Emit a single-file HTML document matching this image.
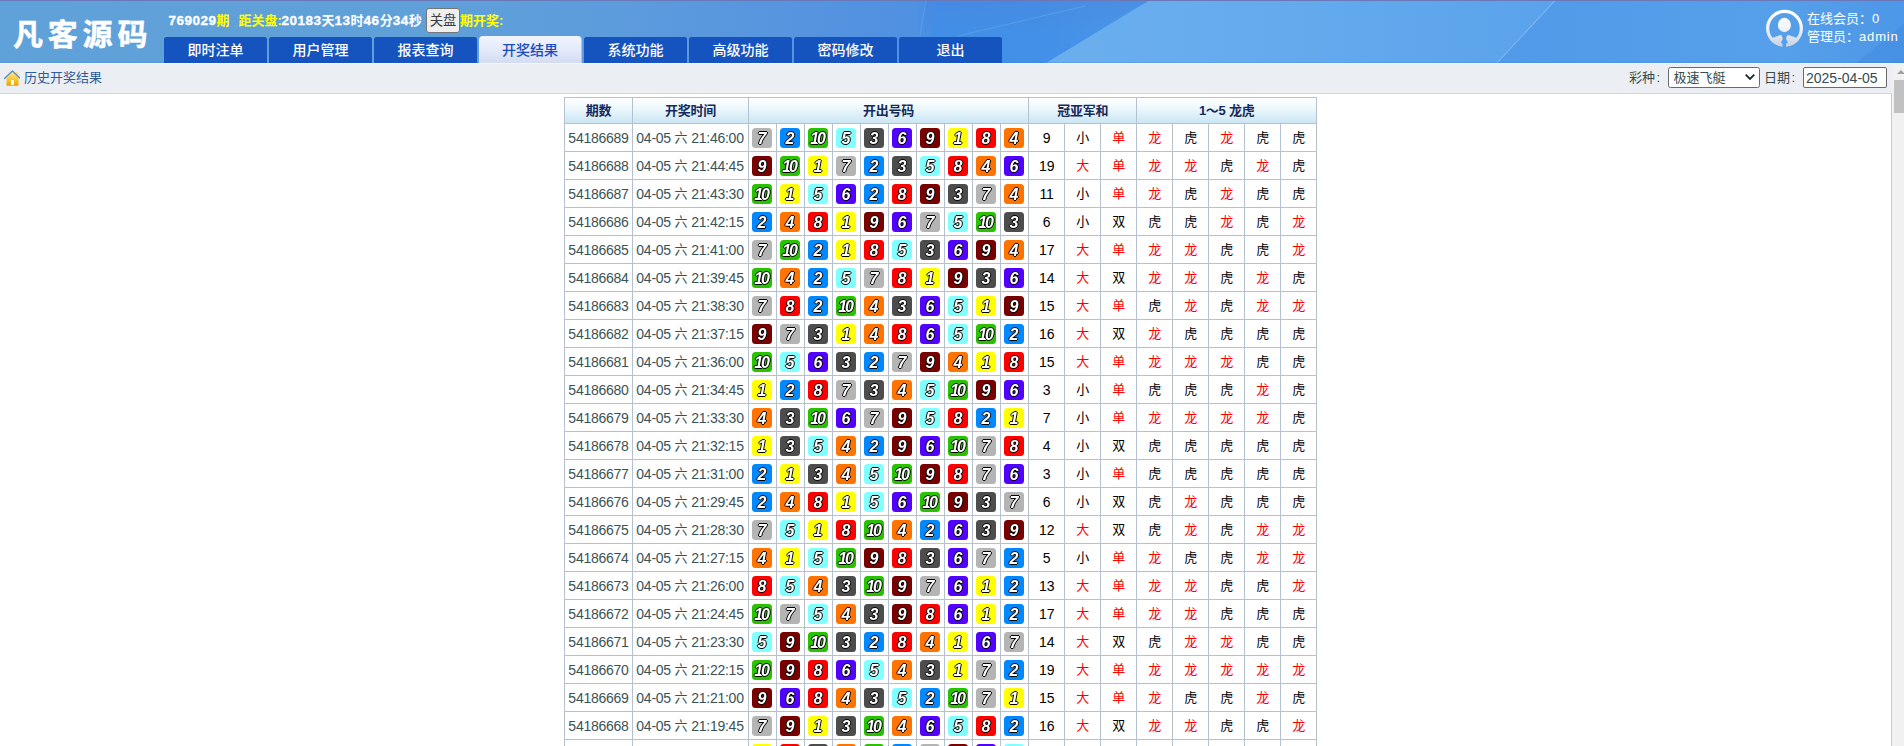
<!DOCTYPE html>
<html lang="zh-CN">
<head>
<meta charset="utf-8">
<title>历史开奖结果</title>
<style>
*{box-sizing:border-box;margin:0;padding:0}
html,body{width:1904px;height:746px;overflow:hidden;background:#fff}
body{position:relative;font-family:"Liberation Sans","Noto Sans CJK SC",sans-serif;font-size:13px;color:#344b50}
.abs{position:absolute;white-space:nowrap}

/* ---------- header ---------- */
#hd{position:absolute;left:0;top:0;width:1904px;height:63px;overflow:hidden;
 background:linear-gradient(90deg,#5fa1d9 0,#5fa0d9 430px,#5d9cdc 600px,#5694df 800px,#5090e1 915px,#418ee6 935px,#4290e7 1040px,#4a96e8 1150px,#529be9 1560px,#569fe9 1780px,#4c97e7 1904px)}
#hd .topline{position:absolute;left:0;top:0;width:100%;height:1px;background:#6a78b8}
#hd .botline{position:absolute;left:0;bottom:0;width:100%;height:1px;background:rgba(40,110,200,.18)}
#logo{left:13px;top:12px;font-size:30px;line-height:40px;font-weight:bold;color:#fff;letter-spacing:4.8px;-webkit-text-stroke:.5px #fff;transform:scaleY(.985);transform-origin:0 40%;font-family:"Noto Sans CJK SC","Liberation Sans",sans-serif}
.info{top:12px;height:18px;line-height:18px;font-size:13.5px;font-weight:bold;color:#fff;letter-spacing:.5px;-webkit-text-stroke:.35px #fff}
.info.cj{letter-spacing:0;font-size:13px;-webkit-text-stroke:0}
.info .c{letter-spacing:0;font-size:13px;-webkit-text-stroke:0}
.y{color:#ffff00}
#btn{left:426px;top:8px;width:34px;height:25px;border:1px solid #767676;border-radius:3px;background:#efefef;color:#3d3d3d;font-size:13.33px;line-height:24.5px;text-align:center}
.tab{position:absolute;top:37px;width:103px;height:26px;background:#1553be;border-radius:2.5px 2.5px 0 0;color:#fff;font-size:14px;font-weight:500;line-height:26px;text-align:center}
.tab.on{top:36px;height:27px;line-height:28px;background:linear-gradient(#f0f4fd,#e4eafa 50%,#d3dcf3);color:#1a4cc0;border-radius:4px 4px 0 0;border-right:1px solid #b4c2e3}
.uinfo{left:1807px;font-size:13px;line-height:18px;color:#fff}

/* ---------- breadcrumb bar ---------- */
#bar{position:absolute;left:0;top:63px;width:1892px;height:31px;background:#ebeff3;border-top:1px solid #f6f6f7;border-bottom:1px solid #c9d9ee}
#bar .ttl{left:24px;top:5px;line-height:18px;font-size:13px;color:#2f5a9b}
#bar .lb{top:5px;line-height:18px;font-size:13px;color:#344b50}
#sel{left:1668px;top:3px;width:92px;height:21px;border:1px solid #6a6a6a;border-radius:2.5px;background:#fff;font-size:13px;line-height:19px;padding-left:4.5px;color:#344b50}
#date{left:1803px;top:3px;width:84px;height:21px;border:1px solid #6a6a6a;border-radius:2px;background:#fff;font-size:14px;line-height:21px;padding-left:2px;color:#344b50}

/* ---------- scrollbar ---------- */
#vline{position:absolute;left:1891px;top:94px;width:1px;height:652px;background:#c9c9c9}
#sb{position:absolute;left:1892px;top:63px;width:17px;height:683px;background:#f1f1f1}
#sb .thumb{position:absolute;left:2px;top:17px;width:13px;height:33px;background:#c1c1c1}
#sb .arr{position:absolute;left:4.5px;top:7px;width:0;height:0;border-left:4px solid transparent;border-right:4px solid transparent;border-bottom:4px solid #a0a0a0}

/* ---------- table ---------- */
#tb{position:absolute;left:564px;top:97px;width:753px;border-collapse:separate;border-spacing:0;table-layout:fixed;border-right:1px solid #b5c1cf;border-bottom:1px solid #b5c1cf;font-size:14px;letter-spacing:-.25px;color:#3a5257}
#tb td,#tb th{border-left:1px solid #b5c1cf;border-top:1px solid #b5c1cf;text-align:center;white-space:nowrap;overflow:hidden;padding:0}
#tb th{height:26px;line-height:25px;font-size:13px;font-weight:bold;color:#152a5c;background:linear-gradient(#ffffff,#f3fafd 30%,#d9eef8 75%,#cbe6f4)}
#tb td{height:28px;line-height:25px;padding-top:2px;vertical-align:top}
#tb td:nth-child(2){padding-right:1px}
#tb td.r{color:#ff0000}
#tb td.k{color:#000}
#tb td.c,#tb td span{font-size:13px;letter-spacing:0}
#tb td.c{padding-top:1px}
#tb td span{position:relative;top:-1px}
#tb td.b{font-size:0;line-height:0;letter-spacing:0;padding-top:4px;padding-right:1px;vertical-align:top}
#tb td.b i{display:inline-block;width:20px;height:20px;border-radius:3.5px;font:italic bold 16px/22px "Liberation Sans",sans-serif;color:#fff;text-align:center;vertical-align:middle;
 text-shadow:1px 0 0 #000,-1px 0 0 #000,0 1px 0 #000,0 -1px 0 #000;will-change:transform}
.n1{background:#ffff00}.n2{background:#0089ff}.n3{background:#4d4d4d}.n4{background:#ff7300}.n5{background:#81ffff}
.n6{background:#5200ff}.n7{background:#b4b4b4}.n8{background:#ff0000}.n9{background:#780000}.n10{background:#28c200;letter-spacing:-2.2px;text-indent:-2.2px}
.n10 b{font:inherit;letter-spacing:inherit}
</style>
</head>
<body>

<div id="hd">
  <svg class="abs" style="left:0;top:0" width="1904" height="63" viewBox="0 0 1904 63">
    <defs>
      <linearGradient id="bgL" x1="0" y1="0" x2="1" y2="0"><stop offset="0" stop-color="#6aaeee"/><stop offset=".3" stop-color="#67aced"/><stop offset=".75" stop-color="#5fa6ec"/><stop offset="1" stop-color="#5aa2eb"/></linearGradient>
      <linearGradient id="bgD" x1="0" y1="0" x2="0" y2="1"><stop offset="0" stop-color="#4d84dc" stop-opacity=".75"/><stop offset="1" stop-color="#4d84dc" stop-opacity="0"/></linearGradient>
    </defs>
    <path d="M926 0 L1150 0 L1100 26 L921 36 Z" fill="url(#bgD)" opacity=".55"/>
    <path d="M1150 0 Q1102 29 1046 63 L1497 63 L1555.5 0 Z" fill="url(#bgL)"/>
    <path d="M926 0 L920 36" stroke="#7fb4ee" stroke-width="1" opacity=".35" fill="none"/>
    <path d="M958 36 L1085 6" stroke="#8fc0f2" stroke-width="1" opacity=".3" fill="none"/>
    <line x1="1555.5" y1="0" x2="1497" y2="63" stroke="#9bcbf5" stroke-width="1.1" opacity=".55"/>
    <polygon points="1904,24 1904,63 1856,63" fill="#3c86dc" opacity=".32"/>
  </svg>
  <div class="topline"></div>
  <div class="botline"></div>
  <div id="logo" class="abs">凡客源码</div>

  <div class="abs info" style="left:168.5px">769029</div>
  <div class="abs info cj y" style="left:216.5px">期</div>
  <div class="abs info cj y" style="left:238.5px">距关盘:</div>
  <div class="abs info" style="left:281.5px">20183<span class="c">天</span>13<span class="c">时</span>46<span class="c">分</span>34<span class="c">秒</span></div>
  <div id="btn" class="abs">关盘</div>
  <div class="abs info cj y" style="left:460px">期开奖:</div>

  <div class="tab" style="left:164px">即时注单</div>
  <div class="tab" style="left:269px">用户管理</div>
  <div class="tab" style="left:374px">报表查询</div>
  <div class="tab on" style="left:479px">开奖结果</div>
  <div class="tab" style="left:584px">系统功能</div>
  <div class="tab" style="left:689px">高级功能</div>
  <div class="tab" style="left:794px">密码修改</div>
  <div class="tab" style="left:899px">退出</div>

  <svg class="abs" style="left:1764px;top:8px" width="41" height="41" viewBox="0 0 41 41">
    <defs>
      <linearGradient id="ug" gradientUnits="userSpaceOnUse" x1="0" y1="2" x2="0" y2="39"><stop offset="0" stop-color="#ffffff"/><stop offset=".45" stop-color="#f4f6fa"/><stop offset="1" stop-color="#c6d0e3"/></linearGradient>
      <clipPath id="uc"><circle cx="20.5" cy="20.3" r="18.4"/></clipPath>
    </defs>
    <circle cx="20.5" cy="20.3" r="16.85" fill="none" stroke="url(#ug)" stroke-width="3.2" stroke-dasharray="24.6 3.9 77.37 0"/>
    <ellipse cx="20.4" cy="17" rx="6.55" ry="7.2" fill="url(#ug)"/>
    <g clip-path="url(#uc)" fill="url(#ug)">
      <path d="M17.1 26.8 L4 31.3 L4 40 L18.4 40 L18.4 37.6 L16.6 35.9 L18.9 30.2 Z"/>
      <path d="M23.7 26.8 L37 31.3 L37 40 L22.4 40 L22.4 37.6 L24.2 35.9 L21.9 30.2 Z"/>
    </g>
  </svg>
  <div class="abs uinfo" style="top:10px">在线会员：0</div>
  <div class="abs uinfo" style="top:28px">管理员：<span style="letter-spacing:.85px">admin</span></div>
</div>

<div id="bar">
  <svg class="abs" style="left:3px;top:5px" width="19" height="18" viewBox="0 0 19 18">
    <defs><linearGradient id="hg" x1="0" y1="0" x2="0" y2="1"><stop offset="0" stop-color="#ffe78a"/><stop offset=".5" stop-color="#fcc93a"/><stop offset="1" stop-color="#e6a300"/></linearGradient></defs>
    <path d="M3.5 9 L9.5 3 L15.5 9 L15.5 16.7 L3.5 16.7 Z" fill="url(#hg)"/>
    <path d="M13 3 h2.4 v4 l-2.4 -2.4z" fill="#fde18a"/>
    <rect x="8" y="11.2" width="3" height="4.6" fill="#fff"/>
    <path d="M1.5 9.5 L9.4 1.9 L16.5 8.8" fill="none" stroke="#5a8fc9" stroke-width="1.4" stroke-linecap="round" stroke-linejoin="round"/>
  </svg>
  <div class="abs ttl">历史开奖结果</div>
  <div class="abs lb" style="left:1629px">彩种<span style="margin-left:1.5px">:</span></div>
  <div id="sel" class="abs">极速飞艇
    <svg class="abs" style="left:75px;top:5px" width="12" height="8" viewBox="0 0 12 8"><path d="M1.7 1.6 L6 5.9 L10.3 1.6" fill="none" stroke="#1d2b2e" stroke-width="1.9"/></svg>
  </div>
  <div class="abs lb" style="left:1764px">日期<span style="margin-left:1.5px">:</span></div>
  <div id="date" class="abs">2025-04-05</div>
</div>

<div id="vline"></div>
<div id="sb"><div class="arr"></div><div class="thumb"></div></div>

<table id="tb">
<colgroup><col style="width:68px"><col style="width:116px">
<col style="width:28px"><col style="width:28px"><col style="width:28px"><col style="width:28px"><col style="width:28px"><col style="width:28px"><col style="width:28px"><col style="width:28px"><col style="width:28px"><col style="width:28px">
<col style="width:36px"><col style="width:36px"><col style="width:36px"><col style="width:36px"><col style="width:36px"><col style="width:36px"><col style="width:36px"><col style="width:36px"></colgroup>
<tr><th>期数</th><th>开奖时间</th><th colspan="10">开出号码</th><th colspan="3">冠亚军和</th><th colspan="5">1～5 龙虎</th></tr>
<tr><td>54186689</td><td>04-05 <span>六</span> 21:46:00</td><td class="b"><i class="n7">7</i></td><td class="b"><i class="n2">2</i></td><td class="b"><i class="n10">1<b>0</b></i></td><td class="b"><i class="n5">5</i></td><td class="b"><i class="n3">3</i></td><td class="b"><i class="n6">6</i></td><td class="b"><i class="n9">9</i></td><td class="b"><i class="n1">1</i></td><td class="b"><i class="n8">8</i></td><td class="b"><i class="n4">4</i></td><td class="k">9</td><td class="k c">小</td><td class="r c">单</td><td class="r c">龙</td><td class="k c">虎</td><td class="r c">龙</td><td class="k c">虎</td><td class="k c">虎</td></tr>
<tr><td>54186688</td><td>04-05 <span>六</span> 21:44:45</td><td class="b"><i class="n9">9</i></td><td class="b"><i class="n10">1<b>0</b></i></td><td class="b"><i class="n1">1</i></td><td class="b"><i class="n7">7</i></td><td class="b"><i class="n2">2</i></td><td class="b"><i class="n3">3</i></td><td class="b"><i class="n5">5</i></td><td class="b"><i class="n8">8</i></td><td class="b"><i class="n4">4</i></td><td class="b"><i class="n6">6</i></td><td class="k">19</td><td class="r c">大</td><td class="r c">单</td><td class="r c">龙</td><td class="r c">龙</td><td class="k c">虎</td><td class="r c">龙</td><td class="k c">虎</td></tr>
<tr><td>54186687</td><td>04-05 <span>六</span> 21:43:30</td><td class="b"><i class="n10">1<b>0</b></i></td><td class="b"><i class="n1">1</i></td><td class="b"><i class="n5">5</i></td><td class="b"><i class="n6">6</i></td><td class="b"><i class="n2">2</i></td><td class="b"><i class="n8">8</i></td><td class="b"><i class="n9">9</i></td><td class="b"><i class="n3">3</i></td><td class="b"><i class="n7">7</i></td><td class="b"><i class="n4">4</i></td><td class="k">11</td><td class="k c">小</td><td class="r c">单</td><td class="r c">龙</td><td class="k c">虎</td><td class="r c">龙</td><td class="k c">虎</td><td class="k c">虎</td></tr>
<tr><td>54186686</td><td>04-05 <span>六</span> 21:42:15</td><td class="b"><i class="n2">2</i></td><td class="b"><i class="n4">4</i></td><td class="b"><i class="n8">8</i></td><td class="b"><i class="n1">1</i></td><td class="b"><i class="n9">9</i></td><td class="b"><i class="n6">6</i></td><td class="b"><i class="n7">7</i></td><td class="b"><i class="n5">5</i></td><td class="b"><i class="n10">1<b>0</b></i></td><td class="b"><i class="n3">3</i></td><td class="k">6</td><td class="k c">小</td><td class="k c">双</td><td class="k c">虎</td><td class="k c">虎</td><td class="r c">龙</td><td class="k c">虎</td><td class="r c">龙</td></tr>
<tr><td>54186685</td><td>04-05 <span>六</span> 21:41:00</td><td class="b"><i class="n7">7</i></td><td class="b"><i class="n10">1<b>0</b></i></td><td class="b"><i class="n2">2</i></td><td class="b"><i class="n1">1</i></td><td class="b"><i class="n8">8</i></td><td class="b"><i class="n5">5</i></td><td class="b"><i class="n3">3</i></td><td class="b"><i class="n6">6</i></td><td class="b"><i class="n9">9</i></td><td class="b"><i class="n4">4</i></td><td class="k">17</td><td class="r c">大</td><td class="r c">单</td><td class="r c">龙</td><td class="r c">龙</td><td class="k c">虎</td><td class="k c">虎</td><td class="r c">龙</td></tr>
<tr><td>54186684</td><td>04-05 <span>六</span> 21:39:45</td><td class="b"><i class="n10">1<b>0</b></i></td><td class="b"><i class="n4">4</i></td><td class="b"><i class="n2">2</i></td><td class="b"><i class="n5">5</i></td><td class="b"><i class="n7">7</i></td><td class="b"><i class="n8">8</i></td><td class="b"><i class="n1">1</i></td><td class="b"><i class="n9">9</i></td><td class="b"><i class="n3">3</i></td><td class="b"><i class="n6">6</i></td><td class="k">14</td><td class="r c">大</td><td class="k c">双</td><td class="r c">龙</td><td class="r c">龙</td><td class="k c">虎</td><td class="r c">龙</td><td class="k c">虎</td></tr>
<tr><td>54186683</td><td>04-05 <span>六</span> 21:38:30</td><td class="b"><i class="n7">7</i></td><td class="b"><i class="n8">8</i></td><td class="b"><i class="n2">2</i></td><td class="b"><i class="n10">1<b>0</b></i></td><td class="b"><i class="n4">4</i></td><td class="b"><i class="n3">3</i></td><td class="b"><i class="n6">6</i></td><td class="b"><i class="n5">5</i></td><td class="b"><i class="n1">1</i></td><td class="b"><i class="n9">9</i></td><td class="k">15</td><td class="r c">大</td><td class="r c">单</td><td class="k c">虎</td><td class="r c">龙</td><td class="k c">虎</td><td class="r c">龙</td><td class="r c">龙</td></tr>
<tr><td>54186682</td><td>04-05 <span>六</span> 21:37:15</td><td class="b"><i class="n9">9</i></td><td class="b"><i class="n7">7</i></td><td class="b"><i class="n3">3</i></td><td class="b"><i class="n1">1</i></td><td class="b"><i class="n4">4</i></td><td class="b"><i class="n8">8</i></td><td class="b"><i class="n6">6</i></td><td class="b"><i class="n5">5</i></td><td class="b"><i class="n10">1<b>0</b></i></td><td class="b"><i class="n2">2</i></td><td class="k">16</td><td class="r c">大</td><td class="k c">双</td><td class="r c">龙</td><td class="k c">虎</td><td class="k c">虎</td><td class="k c">虎</td><td class="k c">虎</td></tr>
<tr><td>54186681</td><td>04-05 <span>六</span> 21:36:00</td><td class="b"><i class="n10">1<b>0</b></i></td><td class="b"><i class="n5">5</i></td><td class="b"><i class="n6">6</i></td><td class="b"><i class="n3">3</i></td><td class="b"><i class="n2">2</i></td><td class="b"><i class="n7">7</i></td><td class="b"><i class="n9">9</i></td><td class="b"><i class="n4">4</i></td><td class="b"><i class="n1">1</i></td><td class="b"><i class="n8">8</i></td><td class="k">15</td><td class="r c">大</td><td class="r c">单</td><td class="r c">龙</td><td class="r c">龙</td><td class="r c">龙</td><td class="k c">虎</td><td class="k c">虎</td></tr>
<tr><td>54186680</td><td>04-05 <span>六</span> 21:34:45</td><td class="b"><i class="n1">1</i></td><td class="b"><i class="n2">2</i></td><td class="b"><i class="n8">8</i></td><td class="b"><i class="n7">7</i></td><td class="b"><i class="n3">3</i></td><td class="b"><i class="n4">4</i></td><td class="b"><i class="n5">5</i></td><td class="b"><i class="n10">1<b>0</b></i></td><td class="b"><i class="n9">9</i></td><td class="b"><i class="n6">6</i></td><td class="k">3</td><td class="k c">小</td><td class="r c">单</td><td class="k c">虎</td><td class="k c">虎</td><td class="k c">虎</td><td class="r c">龙</td><td class="k c">虎</td></tr>
<tr><td>54186679</td><td>04-05 <span>六</span> 21:33:30</td><td class="b"><i class="n4">4</i></td><td class="b"><i class="n3">3</i></td><td class="b"><i class="n10">1<b>0</b></i></td><td class="b"><i class="n6">6</i></td><td class="b"><i class="n7">7</i></td><td class="b"><i class="n9">9</i></td><td class="b"><i class="n5">5</i></td><td class="b"><i class="n8">8</i></td><td class="b"><i class="n2">2</i></td><td class="b"><i class="n1">1</i></td><td class="k">7</td><td class="k c">小</td><td class="r c">单</td><td class="r c">龙</td><td class="r c">龙</td><td class="r c">龙</td><td class="r c">龙</td><td class="k c">虎</td></tr>
<tr><td>54186678</td><td>04-05 <span>六</span> 21:32:15</td><td class="b"><i class="n1">1</i></td><td class="b"><i class="n3">3</i></td><td class="b"><i class="n5">5</i></td><td class="b"><i class="n4">4</i></td><td class="b"><i class="n2">2</i></td><td class="b"><i class="n9">9</i></td><td class="b"><i class="n6">6</i></td><td class="b"><i class="n10">1<b>0</b></i></td><td class="b"><i class="n7">7</i></td><td class="b"><i class="n8">8</i></td><td class="k">4</td><td class="k c">小</td><td class="k c">双</td><td class="k c">虎</td><td class="k c">虎</td><td class="k c">虎</td><td class="k c">虎</td><td class="k c">虎</td></tr>
<tr><td>54186677</td><td>04-05 <span>六</span> 21:31:00</td><td class="b"><i class="n2">2</i></td><td class="b"><i class="n1">1</i></td><td class="b"><i class="n3">3</i></td><td class="b"><i class="n4">4</i></td><td class="b"><i class="n5">5</i></td><td class="b"><i class="n10">1<b>0</b></i></td><td class="b"><i class="n9">9</i></td><td class="b"><i class="n8">8</i></td><td class="b"><i class="n7">7</i></td><td class="b"><i class="n6">6</i></td><td class="k">3</td><td class="k c">小</td><td class="r c">单</td><td class="k c">虎</td><td class="k c">虎</td><td class="k c">虎</td><td class="k c">虎</td><td class="k c">虎</td></tr>
<tr><td>54186676</td><td>04-05 <span>六</span> 21:29:45</td><td class="b"><i class="n2">2</i></td><td class="b"><i class="n4">4</i></td><td class="b"><i class="n8">8</i></td><td class="b"><i class="n1">1</i></td><td class="b"><i class="n5">5</i></td><td class="b"><i class="n6">6</i></td><td class="b"><i class="n10">1<b>0</b></i></td><td class="b"><i class="n9">9</i></td><td class="b"><i class="n3">3</i></td><td class="b"><i class="n7">7</i></td><td class="k">6</td><td class="k c">小</td><td class="k c">双</td><td class="k c">虎</td><td class="r c">龙</td><td class="k c">虎</td><td class="k c">虎</td><td class="k c">虎</td></tr>
<tr><td>54186675</td><td>04-05 <span>六</span> 21:28:30</td><td class="b"><i class="n7">7</i></td><td class="b"><i class="n5">5</i></td><td class="b"><i class="n1">1</i></td><td class="b"><i class="n8">8</i></td><td class="b"><i class="n10">1<b>0</b></i></td><td class="b"><i class="n4">4</i></td><td class="b"><i class="n2">2</i></td><td class="b"><i class="n6">6</i></td><td class="b"><i class="n3">3</i></td><td class="b"><i class="n9">9</i></td><td class="k">12</td><td class="r c">大</td><td class="k c">双</td><td class="k c">虎</td><td class="r c">龙</td><td class="k c">虎</td><td class="r c">龙</td><td class="r c">龙</td></tr>
<tr><td>54186674</td><td>04-05 <span>六</span> 21:27:15</td><td class="b"><i class="n4">4</i></td><td class="b"><i class="n1">1</i></td><td class="b"><i class="n5">5</i></td><td class="b"><i class="n10">1<b>0</b></i></td><td class="b"><i class="n9">9</i></td><td class="b"><i class="n8">8</i></td><td class="b"><i class="n3">3</i></td><td class="b"><i class="n6">6</i></td><td class="b"><i class="n7">7</i></td><td class="b"><i class="n2">2</i></td><td class="k">5</td><td class="k c">小</td><td class="r c">单</td><td class="r c">龙</td><td class="k c">虎</td><td class="k c">虎</td><td class="r c">龙</td><td class="r c">龙</td></tr>
<tr><td>54186673</td><td>04-05 <span>六</span> 21:26:00</td><td class="b"><i class="n8">8</i></td><td class="b"><i class="n5">5</i></td><td class="b"><i class="n4">4</i></td><td class="b"><i class="n3">3</i></td><td class="b"><i class="n10">1<b>0</b></i></td><td class="b"><i class="n9">9</i></td><td class="b"><i class="n7">7</i></td><td class="b"><i class="n6">6</i></td><td class="b"><i class="n1">1</i></td><td class="b"><i class="n2">2</i></td><td class="k">13</td><td class="r c">大</td><td class="r c">单</td><td class="r c">龙</td><td class="r c">龙</td><td class="k c">虎</td><td class="k c">虎</td><td class="r c">龙</td></tr>
<tr><td>54186672</td><td>04-05 <span>六</span> 21:24:45</td><td class="b"><i class="n10">1<b>0</b></i></td><td class="b"><i class="n7">7</i></td><td class="b"><i class="n5">5</i></td><td class="b"><i class="n4">4</i></td><td class="b"><i class="n3">3</i></td><td class="b"><i class="n9">9</i></td><td class="b"><i class="n8">8</i></td><td class="b"><i class="n6">6</i></td><td class="b"><i class="n1">1</i></td><td class="b"><i class="n2">2</i></td><td class="k">17</td><td class="r c">大</td><td class="r c">单</td><td class="r c">龙</td><td class="r c">龙</td><td class="k c">虎</td><td class="k c">虎</td><td class="k c">虎</td></tr>
<tr><td>54186671</td><td>04-05 <span>六</span> 21:23:30</td><td class="b"><i class="n5">5</i></td><td class="b"><i class="n9">9</i></td><td class="b"><i class="n10">1<b>0</b></i></td><td class="b"><i class="n3">3</i></td><td class="b"><i class="n2">2</i></td><td class="b"><i class="n8">8</i></td><td class="b"><i class="n4">4</i></td><td class="b"><i class="n1">1</i></td><td class="b"><i class="n6">6</i></td><td class="b"><i class="n7">7</i></td><td class="k">14</td><td class="r c">大</td><td class="k c">双</td><td class="k c">虎</td><td class="r c">龙</td><td class="r c">龙</td><td class="k c">虎</td><td class="k c">虎</td></tr>
<tr><td>54186670</td><td>04-05 <span>六</span> 21:22:15</td><td class="b"><i class="n10">1<b>0</b></i></td><td class="b"><i class="n9">9</i></td><td class="b"><i class="n8">8</i></td><td class="b"><i class="n6">6</i></td><td class="b"><i class="n5">5</i></td><td class="b"><i class="n4">4</i></td><td class="b"><i class="n3">3</i></td><td class="b"><i class="n1">1</i></td><td class="b"><i class="n7">7</i></td><td class="b"><i class="n2">2</i></td><td class="k">19</td><td class="r c">大</td><td class="r c">单</td><td class="r c">龙</td><td class="r c">龙</td><td class="r c">龙</td><td class="r c">龙</td><td class="r c">龙</td></tr>
<tr><td>54186669</td><td>04-05 <span>六</span> 21:21:00</td><td class="b"><i class="n9">9</i></td><td class="b"><i class="n6">6</i></td><td class="b"><i class="n8">8</i></td><td class="b"><i class="n4">4</i></td><td class="b"><i class="n3">3</i></td><td class="b"><i class="n5">5</i></td><td class="b"><i class="n2">2</i></td><td class="b"><i class="n10">1<b>0</b></i></td><td class="b"><i class="n7">7</i></td><td class="b"><i class="n1">1</i></td><td class="k">15</td><td class="r c">大</td><td class="r c">单</td><td class="r c">龙</td><td class="k c">虎</td><td class="k c">虎</td><td class="r c">龙</td><td class="k c">虎</td></tr>
<tr><td>54186668</td><td>04-05 <span>六</span> 21:19:45</td><td class="b"><i class="n7">7</i></td><td class="b"><i class="n9">9</i></td><td class="b"><i class="n1">1</i></td><td class="b"><i class="n3">3</i></td><td class="b"><i class="n10">1<b>0</b></i></td><td class="b"><i class="n4">4</i></td><td class="b"><i class="n6">6</i></td><td class="b"><i class="n5">5</i></td><td class="b"><i class="n8">8</i></td><td class="b"><i class="n2">2</i></td><td class="k">16</td><td class="r c">大</td><td class="k c">双</td><td class="r c">龙</td><td class="r c">龙</td><td class="k c">虎</td><td class="k c">虎</td><td class="r c">龙</td></tr>
<tr><td>54186667</td><td>04-05 <span>六</span> 21:18:30</td><td class="b"><i class="n1">1</i></td><td class="b"><i class="n8">8</i></td><td class="b"><i class="n3">3</i></td><td class="b"><i class="n4">4</i></td><td class="b"><i class="n10">1<b>0</b></i></td><td class="b"><i class="n2">2</i></td><td class="b"><i class="n7">7</i></td><td class="b"><i class="n9">9</i></td><td class="b"><i class="n6">6</i></td><td class="b"><i class="n5">5</i></td><td class="k">9</td><td class="k c">小</td><td class="r c">单</td><td class="k c">虎</td><td class="r c">龙</td><td class="k c">虎</td><td class="k c">虎</td><td class="r c">龙</td></tr>
</table>

</body>
</html>
